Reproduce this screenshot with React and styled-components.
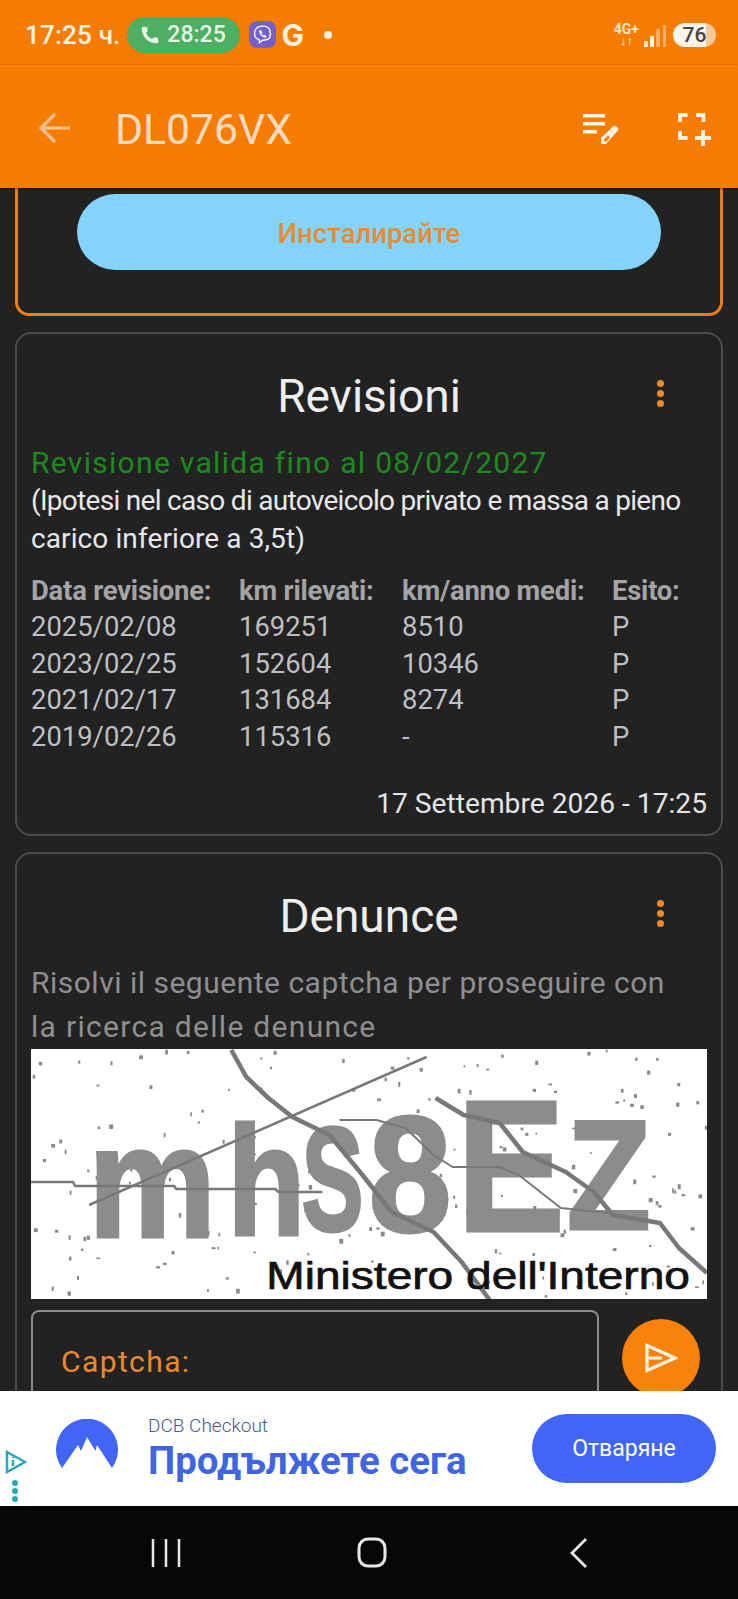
import React from "react";
import styled, { createGlobalStyle } from "styled-components";
import { Phone } from "lucide-react";

const Global = createGlobalStyle`
  html, body { margin: 0; padding: 0; background: #222; }
  body { font-family: Roboto, "Liberation Sans", sans-serif; }
  * { box-sizing: border-box; }
`;

const Page = styled.div`
  width: 738px; height: 1599px; display: flex; flex-direction: column; overflow: hidden; background: #222222;
`;
const StatusBar = styled.div`
  height: 65px; flex: none; background: #f57c00; border-bottom: 1px solid #ea7500;
  display: flex; align-items: center; padding: 5px 22px 0 25px; color: #fff3e4;
`;
const Clock = styled.span`font-size: 26px; font-weight: 500; letter-spacing: .2px; margin-right: 6px;`;
const CallPill = styled.div`
  height: 36px; width: 113px; border-radius: 18px; background: #4caf62; color: #e6f6e8;
  display: flex; align-items: center; justify-content: center; gap: 7px; font-size: 23px; font-weight: 500;
`;
const ViberBadge = styled.div`
  width: 27px; height: 27px; border-radius: 8px; background: #7360c9; margin-left: 9px;
  display: flex; align-items: center; justify-content: center;
`;
const GLetter = styled.span`font-family: Inter, sans-serif; font-size: 30px; font-weight: 700; margin-left: 6px; color: #fff0dc; line-height: 1;`;
const Dot = styled.span`width: 8px; height: 8px; border-radius: 50%; background: #fff0dc; margin-left: 20px;`;
const StatusRight = styled.div`margin-left: auto; display: flex; align-items: center; gap: 7px;`;
const Net = styled.div`
  display: flex; flex-direction: column; align-items: center; font-size: 14px; font-weight: 700; line-height: 12px; color: #ffe4c4; margin-right: -2px;
`;
const NetArrows = styled.span`font-size: 13px; line-height: 12px; font-weight: 900; color: #fff3e4;`;
const Battery = styled.div`
  width: 43px; height: 24px; border-radius: 12px; color: #444; font-size: 21px; font-weight: 500;
  background: linear-gradient(90deg, #fff6ec 0 76%, #f7c99a 76% 100%);
  display: flex; align-items: center; justify-content: center;
`;

const AppBar = styled.header`
  height: 123px; flex: none; background: #f57c00; display: flex; align-items: center; padding: 0 27px 0 38px;
  box-shadow: 0 1px 2px rgba(0,0,0,.4); position: relative; z-index: 1;
`;
const Back = styled.svg`display: block; margin-right: 45px; margin-top: 3px;`;
const Title = styled.h1`margin: 0; font-size: 42.700px; font-weight: 400; color: #ffdcc0; line-height: 1; margin-top: 6px;`;
const BarActions = styled.div`margin-left: auto; display: flex; align-items: center; gap: 59px; margin-top: 5px;`;

const Content = styled.main`
  flex: 1; min-height: 0; overflow: hidden; display: flex; flex-direction: column; gap: 16px; padding: 0 15px;
`;
const PromoCard = styled.section`
  flex: none; height: 128px; border: 3px solid #f07d10; border-top: none; border-radius: 0 0 14px 14px; padding: 6px 59px 0;
`;
const InstallButton = styled.div`
  height: 76px; border-radius: 38px; background: #83d3fa; color: #e58c35; font-size: 27.500px; font-weight: 500; padding-top: 2px;
  display: flex; align-items: center; justify-content: center;
`;
const Card = styled.section`
  flex: none; border: 2px solid #4c4c4e; border-radius: 16px; padding: 0 14px; ${p => p.$clip && "height: 600px;"}
`;
const CardHead = styled.div`
  display: grid; grid-template-columns: 1fr auto 1fr; align-items: center; height: 104px; padding-top: 20px;
`;
const CardTitle = styled.h2`grid-column: 2; margin: 0; font-size: 46px; font-weight: 400; color: #eeeef0; line-height: 1;`;
const Kebab = styled.div`
  justify-self: end; margin-right: 43px; display: flex; flex-direction: column; gap: 3px; margin-top: -5px;
  i { width: 7px; height: 7px; border-radius: 50%; background: #ee8a2a; display: block; }
`;
const Valid = styled.div`font-size: 30px; letter-spacing: 1.300px; color: #1e8a1e; line-height: 36px; margin-top: 7px;`;
const Note = styled.div`margin-top: 1px;`;
const NoteLine = styled.div`
  font-size: 28px; color: #e8e8ea; line-height: 38px; white-space: nowrap;
  letter-spacing: ${p => (p.$tight ? "-.7px" : ".1px")};
`;
const RevTable = styled.div`
  display: grid; grid-template-columns: 208px 163px 210px 1fr; margin-top: 15px; font-size: 27.400px; line-height: 36.400px; color: #bfbfc1;
`;
const Th = styled.div`font-weight: 700; color: #a4a4a6; letter-spacing: -.2px; white-space: nowrap;`;
const Stamp = styled.div`text-align: right; font-size: 28.200px; color: #e4e4e6; margin-top: 31px; line-height: 36px; height: 48px;`;
const Hint = styled.div`margin-top: 3px;`;
const HintLine = styled.div`
  font-size: 30px; line-height: 44px; color: #8f8f91; white-space: nowrap;
  letter-spacing: ${p => p.$wide ? "1.300px" : ".5px"};
`;
const Captcha = styled.svg`display: block; width: 100%; height: 250px; background: #fff;`;
const CaptchaForm = styled.div`display: flex; align-items: flex-start; margin-top: 11px;`;
const InputBox = styled.div`
  flex: none; width: 568px; height: 120px; border: 2px solid #8b8b8d; border-radius: 8px; padding: 32px 28px; color: #ec8a2a; font-size: 30px; letter-spacing: 1.400px;
`;
const Fab = styled.div`
  flex: none; width: 78px; height: 78px; border-radius: 50%; background: #f8820a; margin: 9px 0 0 23px;
  display: flex; align-items: center; justify-content: center;
`;

const Ad = styled.aside`
  height: 115px; flex: none; background: #fff; display: flex; align-items: center; position: relative; z-index: 1; padding: 0 22px 0 56px;
`;
const AdBadge = styled.div`position: absolute; left: 5px; top: 59px; display: flex; flex-direction: column; align-items: center; gap: 6px;`;
const AdDots = styled.div`
  display: flex; flex-direction: column; gap: 2px; margin-left: -2px;
  i { width: 6px; height: 6px; border-radius: 50%; background: #2aa6b8; display: block; }
`;
const AdLogo = styled.svg`display: block; margin-top: -10px;`;
const AdText = styled.div`margin-left: 30px; display: flex; flex-direction: column; padding-top: 2px;`;
const AdBrand = styled.span`font-size: 19px; font-weight: 300; color: #4a5a8a; line-height: 22px;`;
const AdHead = styled.span`font-size: 38.400px; font-weight: 700; color: #3f66e0; line-height: 48px;`;
const AdCta = styled.div`
  margin-left: auto; width: 184px; height: 69px; border-radius: 35px; background: #4166f5; color: #fff; font-size: 23px;
  display: flex; align-items: center; justify-content: center;
`;
const Nav = styled.nav`
  height: 93px; flex: none; background: #070707; display: grid; grid-template-columns: 206px 212px 1fr; align-items: center; justify-items: start; padding-left: 151px;
`;

const rows = [
  ["2025/02/08", "169251", "8510", "P"],
  ["2023/02/25", "152604", "10346", "P"],
  ["2021/02/17", "131684", "8274", "P"],
  ["2019/02/26", "115316", "-", "P"],
];

// Seeded speckle noise of the captcha image.
const speckle = (() => {
  let s = 12345;
  const r = () => (s = (s * 16807) % 2147483647) / 2147483647;
  return Array.from({ length: 190 }, () => ({ x: r() * 675, y: r() * 250, w: 1.5 + r() * 2.5, h: 1.5 + r() * 3.5 }));
})();

const captchaGlyphs = [
  { c: "m", x: 57, y: 188, size: 160, w: 128 },
  { c: "h", x: 196, y: 186, size: 155, w: 78 },
  { c: "S", x: 270, y: 182, size: 148, w: 62 },
  { c: "8", x: 337, y: 182, size: 165, w: 83 },
  { c: "E", x: 425, y: 182, size: 187, w: 108 },
  { c: "Z", x: 535, y: 180, size: 155, w: 84 },
];

function CaptchaImage() {
  return (
    <Captcha viewBox="0 0 675 250" preserveAspectRatio="none">
      {speckle.map((d, i) => <rect key={i} x={d.x} y={d.y} width={d.w} height={d.h} fill="#8a8a8a" />)}
      {captchaGlyphs.map(g => (
        <text key={g.c} x={g.x} y={g.y} fontFamily="'Liberation Sans', sans-serif" fontWeight="700" fontSize={g.size} fill="#8c8c8c" stroke="#8c8c8c" strokeWidth="3" textLength={g.w} lengthAdjust="spacingAndGlyphs">{g.c}</text>
      ))}
      <g fill="none" stroke="#787878" strokeLinejoin="round">
        <path d="M200 1 L215 28 237 49 261 68 298 86 331 126 360 163 402 183 430 213 458 251" strokeWidth="4.500" />
        <path d="M404 49 L432 66 468 74 491 103 534 123 562 143 581 166 628 174 647 199 675 224" strokeWidth="4.500" />
        <path d="M58 156 L395 8" strokeWidth="2.500" />
        <path d="M0 133 H42 L44 137 H143 L145 140 H244 L247 143 H291" strokeWidth="2.500" />
        <path d="M308 71 H345 L374 79 402 106 421 118 H468 L487 126 529 159 576 164" strokeWidth="2" />
      </g>
      <text x="235" y="240" fontFamily="'Liberation Sans', sans-serif" fontSize="38" fill="#111" stroke="#111" strokeWidth=".7" textLength="423" lengthAdjust="spacingAndGlyphs">Ministero dell'Interno</text>
    </Captcha>
  );
}

export default function App() {
  return (
    <Page>
      <Global />
      <StatusBar>
        <Clock>17:25 ч.</Clock>
        <CallPill><Phone size={20} fill="currentColor" strokeWidth={0} />28:25</CallPill>
        <ViberBadge>
          <svg width="21" height="21" viewBox="0 0 20 20" fill="none" stroke="#fff" strokeWidth="1.300">
            <path d="M10 2c5 0 7.500 1.500 7.500 7s-2.500 6.500-7.500 6.500l-3 2.500v-3C3 14 2.500 12 2.500 9S4 2 10 2z" />
            <path d="M7 6.500c0 3 2.500 6 6 6.500l.5-1.500-2-1-1 .6c-.8-.5-1.300-1.100-1.600-2l.7-.9-1-2z" fill="#fff" strokeWidth=".4" />
          </svg>
        </ViberBadge>
        <GLetter>G</GLetter>
        <Dot />
        <StatusRight>
          <Net>4G+<NetArrows>↓↑</NetArrows></Net>
          <svg width="22" height="24" viewBox="0 0 22 24">
            <rect x="0" y="18" width="4" height="6" rx="1" fill="#fff0dc" />
            <rect x="6" y="13" width="4" height="11" rx="1" fill="#fff0dc" />
            <rect x="12" y="6" width="4" height="18" fill="#fbb067" />
            <rect x="19" y="2" width="3" height="22" fill="#fbb067" />
          </svg>
          <Battery>76</Battery>
        </StatusRight>
      </StatusBar>
      <AppBar>
        <Back width="32" height="32" viewBox="0 0 32 32" fill="none" stroke="#ffc294" strokeWidth="3.200">
          <path d="M3 16H32M17 2 3 16l14 14" />
        </Back>
        <Title>DL076VX</Title>
        <BarActions>
          <svg width="36" height="32" viewBox="0 0 36 32" fill="#fff3e4">
            <rect x="0" y="1" width="22" height="3.500" />
            <rect x="0" y="9" width="22" height="3.500" />
            <rect x="0" y="17" width="14" height="3.500" />
            <path d="M18 31v-6L30 13.500a2.500 2.500 0 0 1 3.500 0l1 1a2.500 2.500 0 0 1 0 3.500L23 31z" />
            <path d="M21 28.500v-2l4-4 2 2-4 4z" fill="#f57c00" />
          </svg>
          <svg width="33" height="33" viewBox="0 0 33 33" fill="none" stroke="#fff3e4" strokeWidth="3.800">
            <path d="M2 9V2h7.500M18 2h7.500v7M2 18v7h7.500" />
            <path d="M25 17v16M17 25h16" />
          </svg>
        </BarActions>
      </AppBar>
      <Content>
        <PromoCard><InstallButton>Инсталирайте</InstallButton></PromoCard>
        <Card>
          <CardHead>
            <CardTitle>Revisioni</CardTitle>
            <Kebab><i /><i /><i /></Kebab>
          </CardHead>
          <Valid>Revisione valida fino al 08/02/2027</Valid>
          <Note>
            <NoteLine $tight>(Ipotesi nel caso di autoveicolo privato e massa a pieno</NoteLine>
            <NoteLine>carico inferiore a 3,5t)</NoteLine>
          </Note>
          <RevTable>
            <Th>Data revisione:</Th><Th>km rilevati:</Th><Th>km/anno medi:</Th><Th>Esito:</Th>
            {rows.flat().map((c, i) => <div key={i}>{c}</div>)}
          </RevTable>
          <Stamp>17 Settembre 2026 - 17:25</Stamp>
        </Card>
        <Card $clip>
          <CardHead>
            <CardTitle>Denunce</CardTitle>
            <Kebab><i /><i /><i /></Kebab>
          </CardHead>
          <Hint>
            <HintLine>Risolvi il seguente captcha per proseguire con</HintLine>
            <HintLine $wide>la ricerca delle denunce</HintLine>
          </Hint>
          <CaptchaImage />
          <CaptchaForm>
            <InputBox>Captcha:</InputBox>
            <Fab>
              <svg width="34" height="30" viewBox="0 0 34 30" fill="none" stroke="#fff3e4" strokeWidth="3.200" strokeLinejoin="miter">
                <path d="M3 2.500 31 15 3 27.500zM3 15h15" />
              </svg>
            </Fab>
          </CaptchaForm>
        </Card>
      </Content>
      <Ad>
        <AdBadge>
          <svg width="22" height="24" viewBox="0 0 22 24" fill="none" stroke="#2aa6b8" strokeWidth="2.500">
            <path d="M2 2 20 12 2 22z" />
            <path d="M8 10v6M8 7v1" />
          </svg>
          <AdDots><i /><i /><i /></AdDots>
        </AdBadge>
        <AdLogo width="62" height="50" viewBox="0 0 62 50">
          <path d="M6 49A31 31 0 1 1 56 49L41 26 39.500 32 31 18 25 32 22 26z" fill="#4166f5" />
        </AdLogo>
        <AdText>
          <AdBrand>DCB Checkout</AdBrand>
          <AdHead>Продължете сега</AdHead>
        </AdText>
        <AdCta>Отваряне</AdCta>
      </Ad>
      <Nav>
        <svg width="30" height="30" viewBox="0 0 30 30" stroke="#e8e8e8" strokeWidth="2.500"><path d="M2 1v28M15 1v28M28 1v28" /></svg>
        <svg width="30" height="31" viewBox="0 0 30 31" fill="none" stroke="#e8e8e8" strokeWidth="3"><rect x="2" y="2" width="26" height="27" rx="9" /></svg>
        <svg width="19" height="32" viewBox="0 0 19 32" fill="none" stroke="#e8e8e8" strokeWidth="2.800"><path d="M17 2 3 16l14 14" /></svg>
      </Nav>
    </Page>
  );
}
